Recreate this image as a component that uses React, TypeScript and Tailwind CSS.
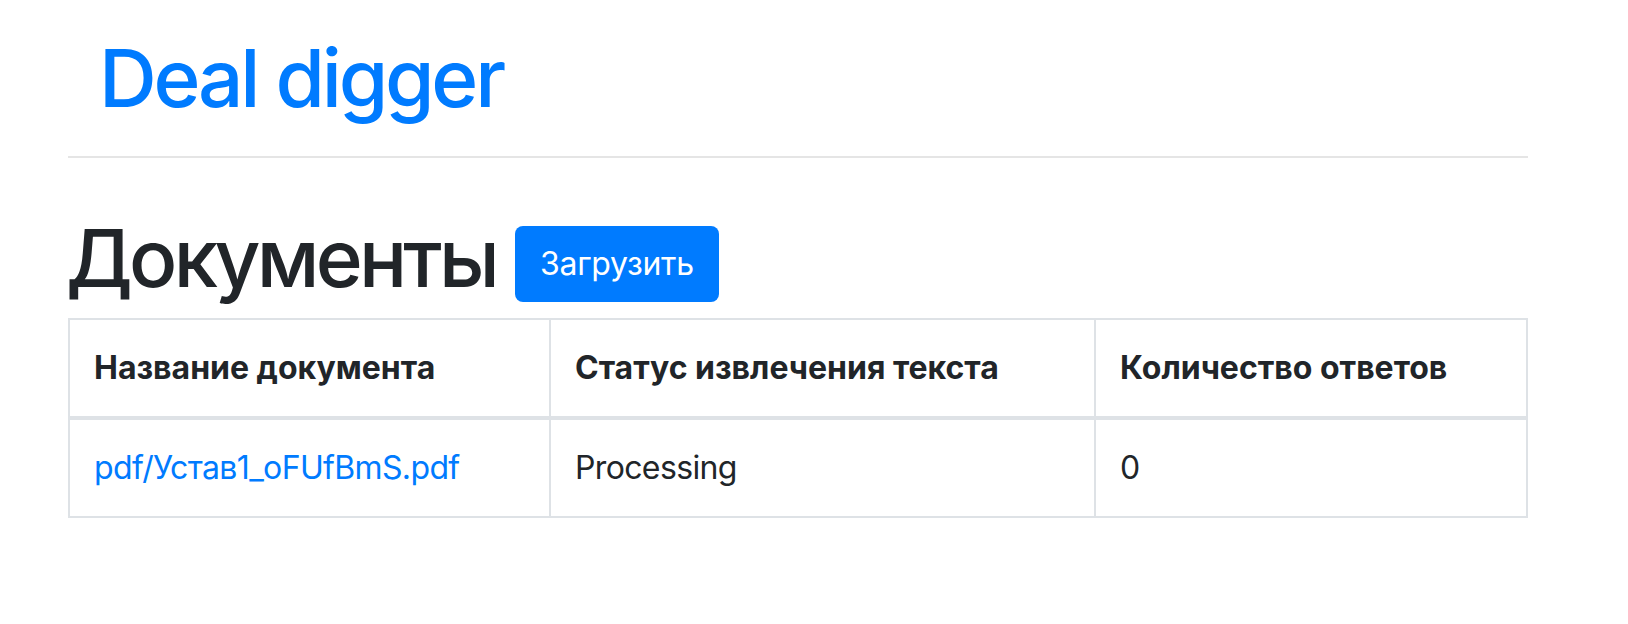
import React from 'react';

const docs = [{ name: 'pdf/Устав1_oFUfBmS.pdf', status: 'Processing', answers: 0 }];

const App: React.FC = () => {
  return (
    <div className="min-h-[624px] bg-white font-['Inter','Noto_Sans',sans-serif] text-[#212529]">
      <div className="ml-[68px] w-[1460px] pt-[30px]">
        <div className="pl-[31px]">
          <a href="#" className="text-[80px] font-medium leading-[96px] tracking-[-0.04em] text-[#007bff]">
            Deal digger
          </a>
        </div>
        <hr className="mt-[30px] border-t-2 border-[#e5e5e5]" />

        <div className="mt-[52px] flex items-start">
          <h1 className="-ml-[2px] text-[80px] font-medium leading-[96px] tracking-[-0.047em]">Документы</h1>
          <button className="ml-[19px] mt-[16px] h-[76px] rounded-[8px] bg-[#007bff] px-[25px] text-[32px] leading-[48px] tracking-[-0.01em] text-white">
            Загрузить
          </button>
        </div>

        <table className="mt-[12px] w-[1458px] table-fixed border-collapse text-[32px] leading-[48px]">
          <colgroup>
            <col className="w-[481px]" />
            <col className="w-[545px]" />
            <col className="w-[432px]" />
          </colgroup>
          <thead>
            <tr>
              <th className="border-2 border-b-4 border-[#dee2e6] p-[24px] text-left font-bold">Название документа</th>
              <th className="border-2 border-b-4 border-[#dee2e6] p-[24px] text-left font-bold">Статус извлечения текста</th>
              <th className="border-2 border-b-4 border-[#dee2e6] p-[24px] text-left font-bold">Количество ответов</th>
            </tr>
          </thead>
          <tbody className="tracking-[-0.02em]">
            {docs.map((d) => (
              <tr key={d.name}>
                <td className="border-2 border-[#dee2e6] p-[24px]">
                  <a href="#" className="text-[#007bff]">{d.name}</a>
                </td>
                <td className="border-2 border-[#dee2e6] p-[24px]">{d.status}</td>
                <td className="border-2 border-[#dee2e6] p-[24px]">{d.answers}</td>
              </tr>
            ))}
          </tbody>
        </table>
      </div>
    </div>
  );
};

export default App;
